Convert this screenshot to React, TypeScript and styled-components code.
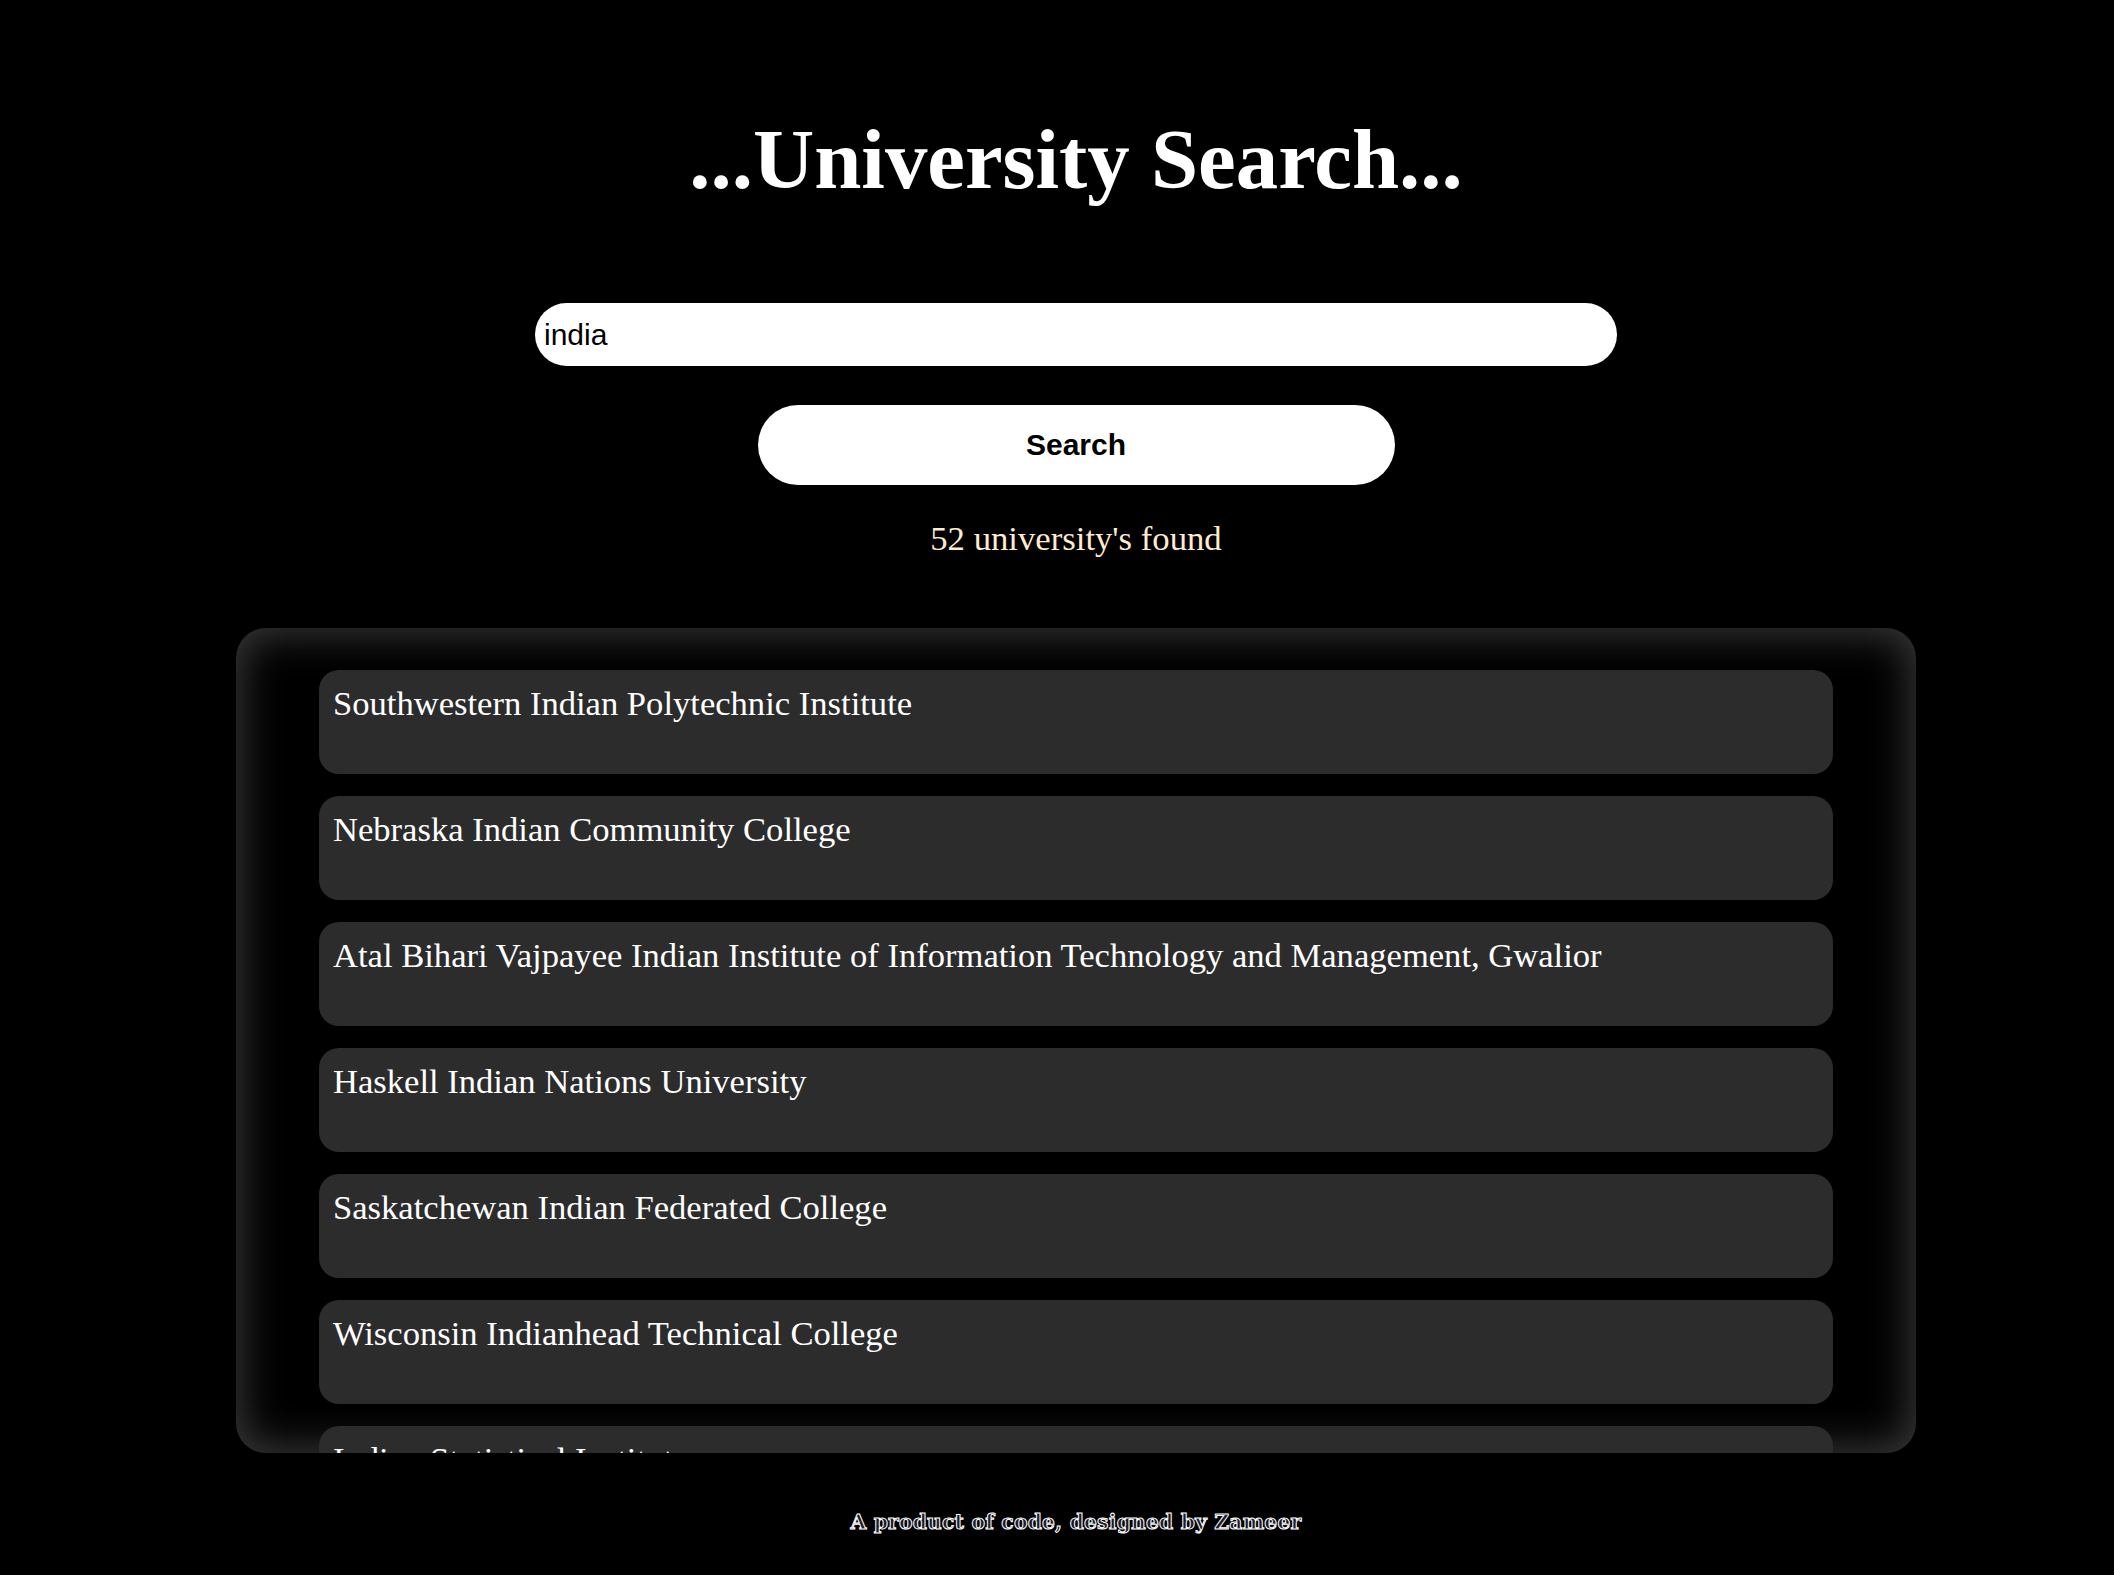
import React from "react";
import styled, { createGlobalStyle } from "styled-components";

const Global = createGlobalStyle`
  html, body { margin: 0; padding: 0; background: #000; }
  body { font-family: "Liberation Serif", "Times New Roman", serif; overflow: hidden; }
`;

const Page = styled.main`
  display: flex;
  flex-direction: column;
  align-items: center;
  padding: 110px 0 0 38px;
  min-height: 100vh;
  box-sizing: border-box;
`;

const Title = styled.h1`
  margin: 0;
  font-family: "Liberation Serif", "Times New Roman", serif;
  font-weight: bold;
  font-size: 84.8px;
  line-height: 98px;
  color: #fff;
`;

const SearchInput = styled.input`
  margin-top: 95px;
  width: 1082px;
  height: 63px;
  box-sizing: border-box;
  border: none;
  outline: none;
  border-radius: 32px;
  background: #fff;
  padding: 0 9px;
  font-family: "Liberation Sans", Arial, sans-serif;
  font-size: 30px;
  color: #000;
`;

const SearchButton = styled.button`
  margin-top: 39px;
  width: 637px;
  height: 80px;
  border: none;
  border-radius: 40px;
  background: #fff;
  font-family: "Liberation Sans", Arial, sans-serif;
  font-weight: bold;
  font-size: 30px;
  color: #000;
  cursor: pointer;
`;

const Count = styled.p`
  margin: 34px 0 0;
  font-size: 34.7px;
  line-height: 40px;
  color: #ffebcd;
`;

const ListBox = styled.section`
  margin-top: 69px;
  width: 1680px;
  height: 825px;
  box-sizing: border-box;
  padding: 42px 83px;
  border-radius: 30px;
  background: #000;
  box-shadow: inset 0 0 40px 6px #383838;
  overflow: hidden;
  display: flex;
  flex-direction: column;
  gap: 22px;
`;

const Item = styled.div`
  flex: none;
  box-sizing: border-box;
  height: 104px;
  padding: 13px 14px;
  border-radius: 20px;
  background: #2c2c2c;
  color: #fff;
  font-size: 34.6px;
  line-height: 41px;
`;

const Footer = styled.footer`
  margin-top: 56px;
  font-family: "DejaVu Serif", serif;
  font-weight: bold;
  font-size: 20.3px;
  line-height: 26px;
  color: #1a1a2a;
  -webkit-text-stroke: 1px #ffffff;
  letter-spacing: 0.2px;
`;

const universities = [
  "Southwestern Indian Polytechnic Institute",
  "Nebraska Indian Community College",
  "Atal Bihari Vajpayee Indian Institute of Information Technology and Management, Gwalior",
  "Haskell Indian Nations University",
  "Saskatchewan Indian Federated College",
  "Wisconsin Indianhead Technical College",
  "Indian Statistical Institute",
  "Indian Institute of Technology, Bombay",
];

export default function App() {
  return (
    <>
      <Global />
      <Page>
        <Title>...University Search...</Title>
        <SearchInput defaultValue="india" />
        <SearchButton>Search</SearchButton>
        <Count>52 university's found</Count>
        <ListBox>
          {universities.map((u) => (
            <Item key={u}>{u}</Item>
          ))}
        </ListBox>
        <Footer>A product of code, designed by Zameer</Footer>
      </Page>
    </>
  );
}
